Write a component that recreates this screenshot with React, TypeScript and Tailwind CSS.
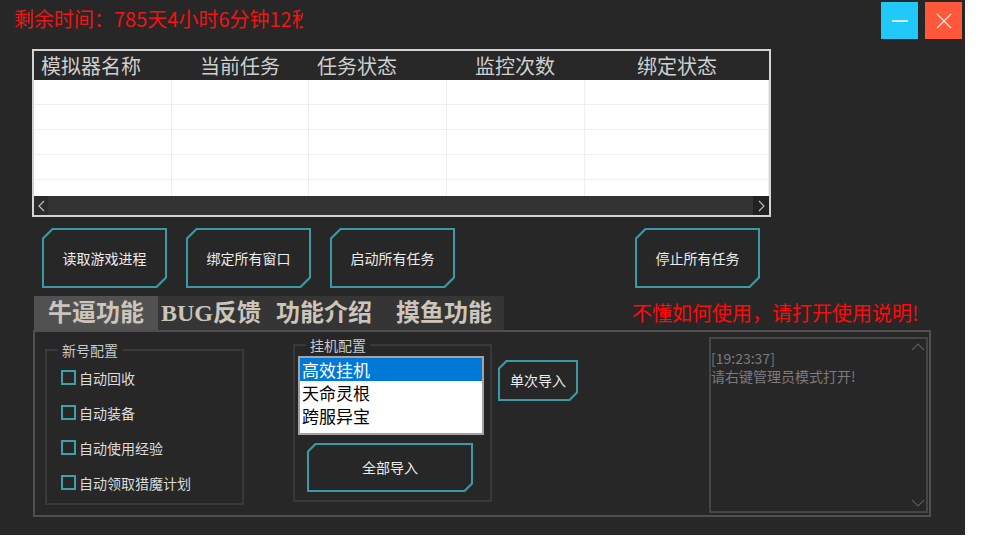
import React from 'react'

// chamfered corner shapes: outer = border colour, inner = fill, inset by the border width
const outer10 = '[clip-path:polygon(10px_0,100%_0,100%_calc(100%_-_10px),calc(100%_-_10px)_100%,0_100%,0_10px)]'
const inner9 = '[clip-path:polygon(9px_0,100%_0,100%_calc(100%_-_9px),calc(100%_-_9px)_100%,0_100%,0_9px)]'
const outer8 = '[clip-path:polygon(8px_0,100%_0,100%_calc(100%_-_8px),calc(100%_-_8px)_100%,0_100%,0_8px)]'
const inner7 = '[clip-path:polygon(7px_0,100%_0,100%_calc(100%_-_7px),calc(100%_-_7px)_100%,0_100%,0_7px)]'

function ChamferButton({ label, size, small }: { label: string; size: string; small?: boolean }) {
  return (
    <button className={`${size} shrink-0 bg-[#3a9ba6] p-[2px] ${small ? outer8 : outer10}`}>
      <span
        className={`flex h-full w-full items-center justify-center bg-[#272727] text-[14px] text-[#ededed] ${
          small ? inner7 : inner9
        }`}
      >
        {label}
      </span>
    </button>
  )
}

function Check({ label }: { label: string }) {
  return (
    <div className="flex h-[35px] items-center gap-[3px]">
      <span className="h-[15px] w-[15px] border-2 border-[#3fa0aa]" />
      <span className="text-[14px] leading-[18px] text-[#dcdcdc]">{label}</span>
    </div>
  )
}

const headers = [
  { t: '模拟器名称', pad: 'pl-[7px]' },
  { t: '当前任务', pad: 'pl-[28px]' },
  { t: '任务状态', pad: 'pl-[8px]' },
  { t: '监控次数', pad: 'pl-[28px]' },
  { t: '绑定状态', pad: 'pl-[52px]' },
]

export default function App() {
  return (
    <div className="min-h-screen bg-white font-['Noto_Sans_CJK_SC',sans-serif]">
      <div className="flex h-[535px] w-[965px] flex-col overflow-hidden bg-[#272727]">
        {/* title bar */}
        <div className="flex h-[49px] shrink-0 items-start justify-between">
          <div className="ml-[14px] mt-[5px] w-[289px] overflow-hidden whitespace-nowrap text-[20px] leading-[28px] text-[#f01414]">
            剩余时间：785天4小时6分钟12秒
          </div>
          <div className="mr-[3px] mt-[2px] flex gap-[7px]">
            <button className="flex h-[37px] w-[37px] items-center justify-center bg-[#20c9f9]">
              <svg width="16" height="4" viewBox="0 0 16 4">
                <line x1="0" y1="2" x2="16" y2="2" stroke="#ffffff" strokeWidth="1.5" />
              </svg>
            </button>
            <button className="flex h-[37px] w-[37px] items-center justify-center bg-[#fe573a]">
              <svg width="16" height="16" viewBox="0 0 16 16" fill="none" stroke="#ffe9e2" strokeWidth="1.2">
                <line x1="1" y1="1" x2="15" y2="15" />
                <line x1="15" y1="1" x2="1" y2="15" />
              </svg>
            </button>
          </div>
        </div>

        {/* list view */}
        <div className="ml-[32px] flex h-[168px] w-[739px] shrink-0 flex-col border-2 border-[#d4d4d4]">
          <div className="grid h-[29px] shrink-0 grid-cols-[138px_137px_138px_138px_1fr] bg-[#282828]">
            {headers.map((h) => (
              <div key={h.t} className={`${h.pad} text-[20px] leading-[29px] text-[#cfcfcf]`}>
                {h.t}
              </div>
            ))}
          </div>
          <div className="grid h-[116px] shrink-0 grid-cols-[138px_137px_138px_138px_1fr] overflow-hidden bg-white">
            {Array.from({ length: 25 }).map((_, i) => (
              <div key={i} className="h-[25px] border-b border-r border-[#efefef]" />
            ))}
          </div>
          <div className="flex h-[19px] shrink-0 bg-[#333333]">
            <div className="flex w-[14px] items-center justify-center bg-[#2b2b2b]">
              <svg width="7" height="12" viewBox="0 0 7 12" fill="none" stroke="#bdbdbd" strokeWidth="1.2">
                <polyline points="6,1 1,6 6,11" />
              </svg>
            </div>
            <div className="flex-1" />
            <div className="flex w-[16px] items-center justify-center bg-[#222222]">
              <svg width="7" height="12" viewBox="0 0 7 12" fill="none" stroke="#bdbdbd" strokeWidth="1.2">
                <polyline points="1,1 6,6 1,11" />
              </svg>
            </div>
          </div>
        </div>

        {/* action buttons */}
        <div className="ml-[42px] mt-[11px] flex shrink-0 gap-[19px]">
          <ChamferButton label="读取游戏进程" size="h-[60px] w-[125px]" />
          <ChamferButton label="绑定所有窗口" size="h-[60px] w-[125px]" />
          <ChamferButton label="启动所有任务" size="h-[60px] w-[125px]" />
          <div className="ml-[161px] flex">
            <ChamferButton label="停止所有任务" size="h-[60px] w-[125px]" />
          </div>
        </div>

        {/* tabs + hint */}
        <div className="mt-[8px] flex h-[34px] shrink-0 items-stretch">
          <div className="ml-[34px] flex font-['Liberation_Serif','Noto_Sans_CJK_SC',serif] text-[24px] font-bold text-[#cbc5bb]">
            <div className="flex w-[124px] items-center justify-center bg-[#515151]">牛逼功能</div>
            <div className="flex bg-[#353535]">
              <div className="flex w-[106px] items-center justify-center">BUG反馈</div>
              <div className="flex w-[120px] items-center justify-center">功能介绍</div>
              <div className="flex w-[120px] items-center justify-center">摸鱼功能</div>
            </div>
          </div>
          <div className="ml-[128px] self-center whitespace-nowrap text-[20px] leading-[24px] text-[#ff0a0a]">
            不懂如何使用，请打开使用说明!
          </div>
        </div>

        {/* tab panel */}
        <div className="ml-[33px] flex h-[187px] w-[898px] shrink-0 items-start border-2 border-[#4f4f4f]">
          <fieldset className="ml-[10px] mt-[11px] h-[162px] w-[199px] border-2 border-[#393939]">
            <legend className="ml-[11px] px-[4px] text-[14px] leading-[14px] text-[#c8c8c8]">新号配置</legend>
            <div className="flex flex-col pl-[14px] pt-[3px]">
              <Check label="自动回收" />
              <Check label="自动装备" />
              <Check label="自动使用经验" />
              <Check label="自动领取猎魔计划" />
            </div>
          </fieldset>

          <fieldset className="ml-[49px] mt-[6px] h-[164px] w-[199px] border-2 border-[#393939]">
            <legend className="ml-[11px] px-[4px] text-[14px] leading-[14px] text-[#c8c8c8]">挂机配置</legend>
            <div className="flex flex-col">
              <div className="ml-[3px] mt-[4px] h-[79px] w-[186px] border-2 border-[#a3a3a3] bg-white text-[17px] leading-[23px] text-black">
                <div className="h-[23px] bg-[#0078d7] pl-[2px] text-white">高效挂机</div>
                <div className="h-[23px] pl-[2px]">天命灵根</div>
                <div className="h-[23px] pl-[2px]">跨服异宝</div>
              </div>
              <div className="ml-[12px] mt-[8px] flex">
                <ChamferButton label="全部导入" size="h-[49px] w-[166px]" small />
              </div>
            </div>
          </fieldset>

          <div className="ml-[6px] mt-[28px] flex">
            <ChamferButton label="单次导入" size="h-[41px] w-[80px]" small />
          </div>

          <div className="ml-[131px] mt-[5px] flex h-[176px] w-[219px] border-2 border-[#464646]">
            <div className="flex flex-1 flex-col gap-[1px] pt-[11px] text-[14px] leading-[17px] text-[#7b7b7b]">
              <div>[19:23:37]</div>
              <div>请右键管理员模式打开!</div>
            </div>
            <div className="flex w-[16px] flex-col items-center justify-between py-[4px]">
              <svg width="14" height="8" viewBox="0 0 14 8" fill="none" stroke="#5a5a5a" strokeWidth="1.2">
                <polyline points="1,7 7,1 13,7" />
              </svg>
              <svg width="14" height="8" viewBox="0 0 14 8" fill="none" stroke="#5a5a5a" strokeWidth="1.2">
                <polyline points="1,1 7,7 13,1" />
              </svg>
            </div>
          </div>
        </div>
      </div>
    </div>
  )
}
